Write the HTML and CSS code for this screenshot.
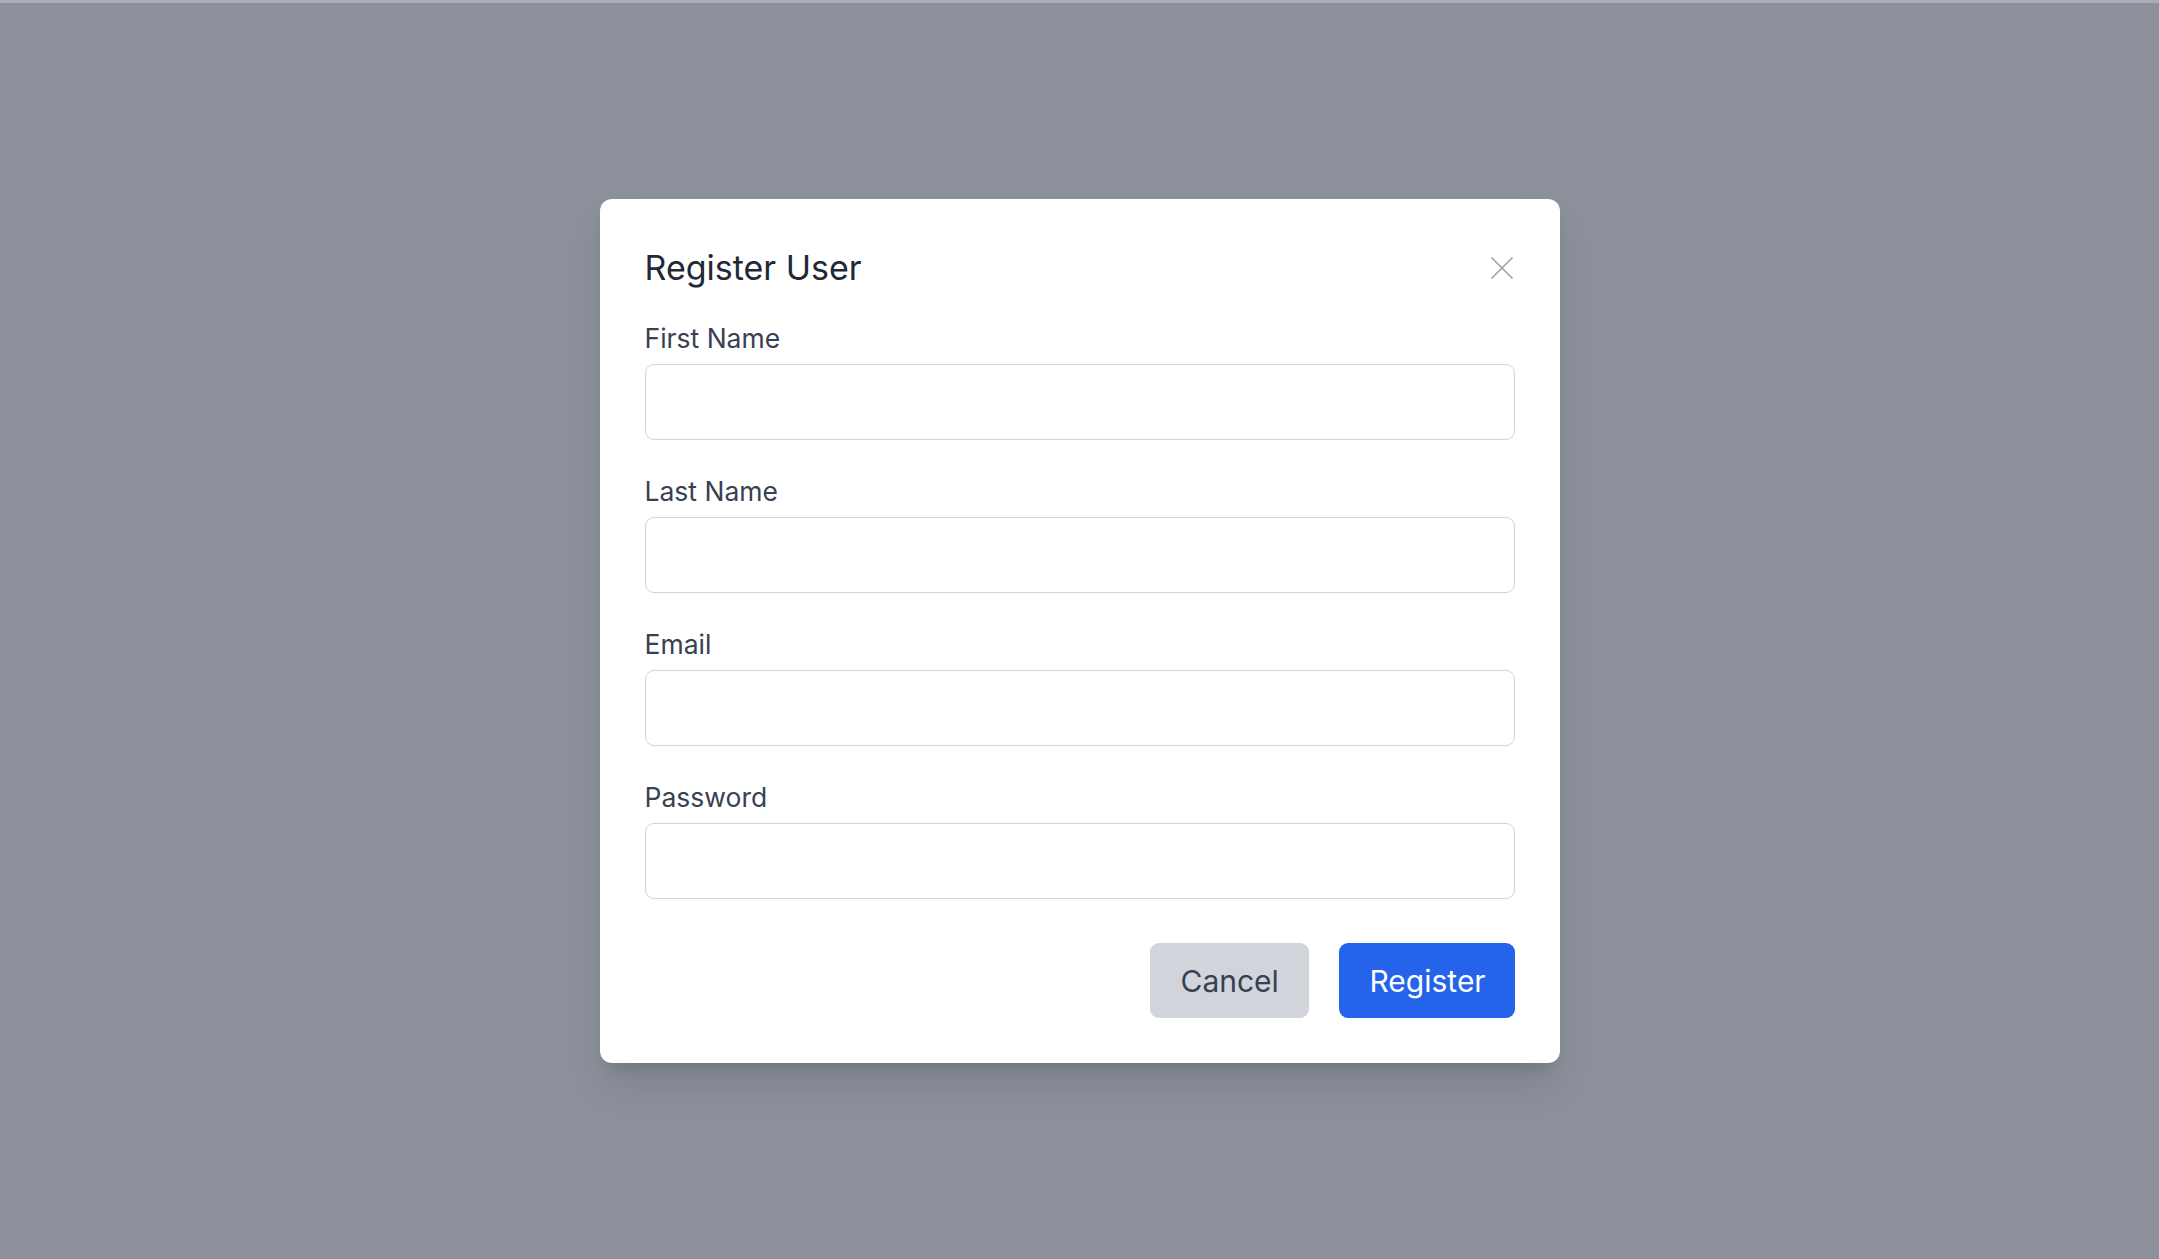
FILE: index.html
```html
<!DOCTYPE html>
<html lang="en">
<head>
<meta charset="utf-8">
<title>Register User</title>
<link rel="stylesheet" href="styles.css">
</head>
<body>
<div class="topstrip"></div>
<div class="overlay">
  <div class="modal">
    <div class="modal-header">
      <h2 class="modal-title">Register User</h2>
      <button class="close-btn" type="button" aria-label="Close">
        <svg width="22" height="22" viewBox="0 0 22 22" fill="none" stroke="currentColor" stroke-width="1.7" stroke-linecap="round"><path d="M1 1L21 21M21 1L1 21"/></svg>
      </button>
    </div>
    <form class="form">
      <div class="field">
        <label class="label">First Name</label>
        <input class="input" type="text">
      </div>
      <div class="field">
        <label class="label">Last Name</label>
        <input class="input" type="text">
      </div>
      <div class="field">
        <label class="label">Email</label>
        <input class="input" type="email">
      </div>
      <div class="field">
        <label class="label">Password</label>
        <input class="input" type="password">
      </div>
      <div class="actions">
        <button class="btn btn-cancel" type="button">Cancel</button>
        <button class="btn btn-primary" type="button">Register</button>
      </div>
    </form>
  </div>
</div>
</body>
</html>
```
FILE: styles.css
```css
* { box-sizing: border-box; }
html, body { margin: 0; padding: 0; }
body {
  font-family: Inter, "Noto Sans", "Liberation Sans", sans-serif;
  background: #8b909b;
  height: 1259px;
  overflow: hidden;
  display: flex;
  flex-direction: column;
}
.topstrip { height: 3px; background: #acaeb5; flex: none; }
.overlay {
  flex: 1;
  display: flex;
  align-items: center;
  justify-content: center;
  padding-top: 0;
}
.modal {
  width: 960px;
  background: #ffffff;
  border-radius: 12px;
  padding: 45px;
  box-shadow: 0 25px 40px -8px rgba(0,0,0,0.12), 0 10px 14px -6px rgba(0,0,0,0.10);
}
.modal-header {
  display: flex;
  align-items: center;
  justify-content: space-between;
  height: 48px;
}
.modal-title {
  margin: 0;
  font-size: 34px;
  line-height: 48px;
  font-weight: 400;
  color: #1f2937;
}
.close-btn {
  border: 0;
  background: none;
  padding: 0;
  margin-right: 2px;
  color: #9ca3af;
  display: flex;
  cursor: pointer;
}
.form { margin-top: 28px; display: flex; flex-direction: column; gap: 33px; }
.field { display: flex; flex-direction: column; }
.label {
  font-size: 26.5px;
  line-height: 36px;
  color: #374151;
  margin-bottom: 8px;
}
.input {
  height: 76px;
  border: 1.5px solid #d1d5db;
  border-radius: 9px;
  background: #fff;
  font: inherit;
  font-size: 22px;
  padding: 0 16px;
}
.actions {
  display: flex;
  justify-content: flex-end;
  gap: 30px;
  margin-top: 11px;
}
.btn {
  border: 0;
  border-radius: 9px;
  height: 75px;
  font-family: inherit;
  font-size: 30px;
  padding: 0 31px;
  cursor: pointer;
}
.btn-cancel { background: #d1d5db; color: #374151; width: 159px; }
.btn-primary { background: #2563eb; color: #ffffff; width: 176px; }
```
